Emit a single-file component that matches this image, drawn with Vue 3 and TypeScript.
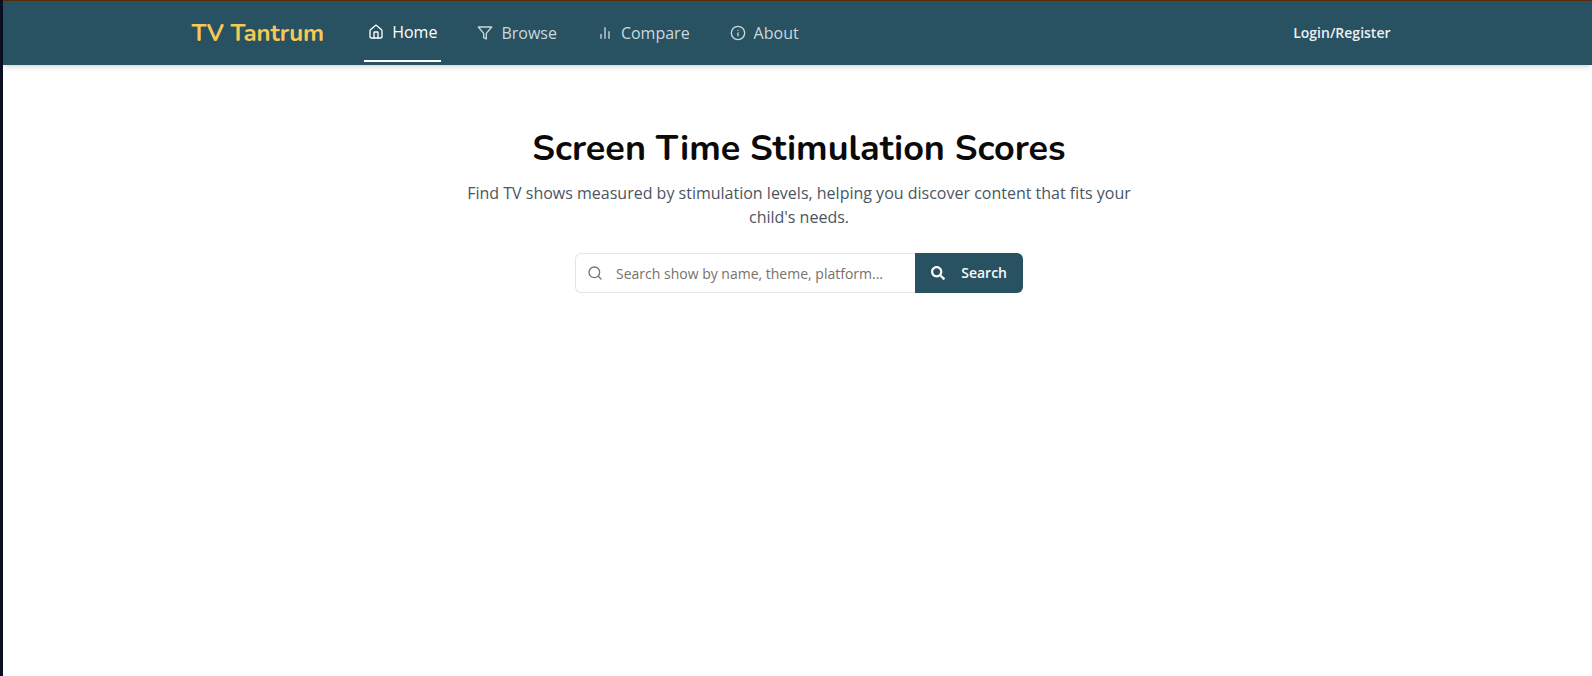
<script setup lang="ts">
import { ref } from 'vue'

interface NavItem {
  label: string
  icon: 'home' | 'filter' | 'bars' | 'info'
  active: boolean
}

const items: NavItem[] = [
  { label: 'Home', icon: 'home', active: true },
  { label: 'Browse', icon: 'filter', active: false },
  { label: 'Compare', icon: 'bars', active: false },
  { label: 'About', icon: 'info', active: false },
]
const query = ref('')
</script>

<template>
  <div class="page">
    <header class="header">
      <div class="bar">
        <a class="brand" href="#">TV Tantrum</a>
        <nav class="nav">
          <a v-for="item in items" :key="item.label" href="#" class="link" :class="{ active: item.active }">
            <svg v-if="item.icon === 'home'" class="icon" viewBox="0 0 24 24">
              <path d="M3 10a2 2 0 0 1 .7-1.5l7-6a2 2 0 0 1 2.6 0l7 6A2 2 0 0 1 21 10v9a2 2 0 0 1-2 2H5a2 2 0 0 1-2-2z" />
              <path d="M15 21v-8a1 1 0 0 0-1-1h-4a1 1 0 0 0-1 1v8" />
            </svg>
            <svg v-else-if="item.icon === 'filter'" class="icon" viewBox="0 0 24 24">
              <path d="M22 3H2l8 9.46V19l4 2v-8.54z" />
            </svg>
            <svg v-else-if="item.icon === 'bars'" class="icon" viewBox="0 0 24 24">
              <path d="M18 20V10M12 20V4M6 20v-6" />
            </svg>
            <svg v-else class="icon" viewBox="0 0 24 24">
              <circle cx="12" cy="12" r="10" />
              <path d="M12 16v-4M12 8h.01" />
            </svg>
            <span>{{ item.label }}</span>
          </a>
        </nav>
        <button class="login" type="button">Login/Register</button>
      </div>
    </header>
    <main class="hero">
      <h1>Screen Time Stimulation Scores</h1>
      <p>Find TV shows measured by stimulation levels, helping you discover content that fits your child's needs.</p>
      <form class="search" role="search" @submit.prevent>
        <label class="field">
          <svg class="icon" viewBox="0 0 24 24">
            <circle cx="11" cy="11" r="8" />
            <path d="m21 21-4.3-4.3" />
          </svg>
          <input v-model="query" type="text" aria-label="Search shows" placeholder="Search show by name, theme, platform..." />
        </label>
        <button class="submit" type="submit">
          <svg viewBox="0 0 512 512" width="14" height="14">
            <path
              fill="currentColor"
              d="M505 442.7 405.300 343c-4.500-4.500-10.600-7-17-7H372c27.600-35.300 44-79.700 44-128C416 93.100 322.900 0 208 0S0 93.100 0 208s93.100 208 208 208c48.300 0 92.700-16.400 128-44v16.300c0 6.400 2.500 12.500 7 17l99.700 99.700c9.400 9.400 24.600 9.400 33.900 0l28.300-28.300c9.400-9.400 9.400-24.600.1-34zM208 336c-70.700 0-128-57.200-128-128 0-70.700 57.200-128 128-128 70.700 0 128 57.200 128 128 0 70.700-57.200 128-128 128z"
            />
          </svg>
          <span>Search</span>
        </button>
      </form>
    </main>
  </div>
</template>

<style>
body {
  margin: 0;
}
</style>

<style scoped>
.page {
  box-sizing: border-box;
  min-height: 100vh;
  border-left: 3px solid #0b1023;
  background: #fff;
  font-family: 'Open Sans', sans-serif;
  font-size: 16px;
  line-height: 24px;
}
.header {
  border-top: 1px solid #562b05;
  background: #285161;
  box-shadow: 0 4px 6px -1px rgba(0, 0, 0, 0.1), 0 2px 4px -2px rgba(0, 0, 0, 0.1);
}
.bar {
  box-sizing: border-box;
  max-width: 1280px;
  height: 64px;
  margin: 0 auto;
  padding: 0 32px 0 34px;
  display: flex;
  align-items: center;
}
.brand {
  margin-right: 40px;
  color: #f6c955;
  font-family: Nunito, Lato, sans-serif;
  font-size: 24px;
  font-weight: 700;
  line-height: 32px;
  text-decoration: none;
}
.nav {
  flex: 1;
  display: flex;
  gap: 32px;
  align-items: center;
}
.link {
  box-sizing: border-box;
  height: 58px;
  padding: 0 4px;
  display: flex;
  align-items: center;
  gap: 8px;
  color: #cbd8dd;
  text-decoration: none;
}
.link.active {
  border-bottom: 2px solid #fff;
  color: #fff;
}
.icon {
  width: 16px;
  height: 16px;
  flex: none;
  fill: none;
  stroke: currentColor;
  stroke-width: 2;
  stroke-linecap: round;
  stroke-linejoin: round;
}
.login {
  padding: 8px 15px;
  border: 0;
  background: none;
  color: #eaf0f2;
  font: 600 14px/20px 'Open Sans', sans-serif;
}
.hero {
  padding: 62px 16px 32px 19px;
  display: flex;
  flex-direction: column;
  align-items: center;
  text-align: center;
}
h1 {
  margin: 0;
  color: #0c0a09;
  font-family: Nunito, Lato, sans-serif;
  font-size: 36px;
  font-weight: 700;
  line-height: 44px;
}
p {
  max-width: 672px;
  margin: 10px 0 24px;
  color: #4b5563;
}
.search {
  width: 100%;
  max-width: 448px;
  display: flex;
}
.field {
  box-sizing: border-box;
  flex: 1;
  min-width: 0;
  height: 40px;
  padding-left: 11px;
  display: flex;
  align-items: center;
  gap: 13px;
  border: 1px solid #e5e5e5;
  border-right: 0;
  border-radius: 6px 0 0 6px;
  color: #6b7280;
}
input {
  flex: 1;
  min-width: 0;
  padding: 2px 0 0;
  border: 0;
  outline: 0;
  background: none;
  color: #0c0a09;
  font: 14px/20px 'Open Sans', sans-serif;
}
input::placeholder {
  color: #78716c;
}
.submit {
  height: 40px;
  padding: 0 16px;
  display: flex;
  align-items: center;
  gap: 16px;
  border: 0;
  border-radius: 0 6px 6px 0;
  background: #285161;
  color: #fafaf9;
  font: 600 14px/20px 'Open Sans', sans-serif;
}
</style>
